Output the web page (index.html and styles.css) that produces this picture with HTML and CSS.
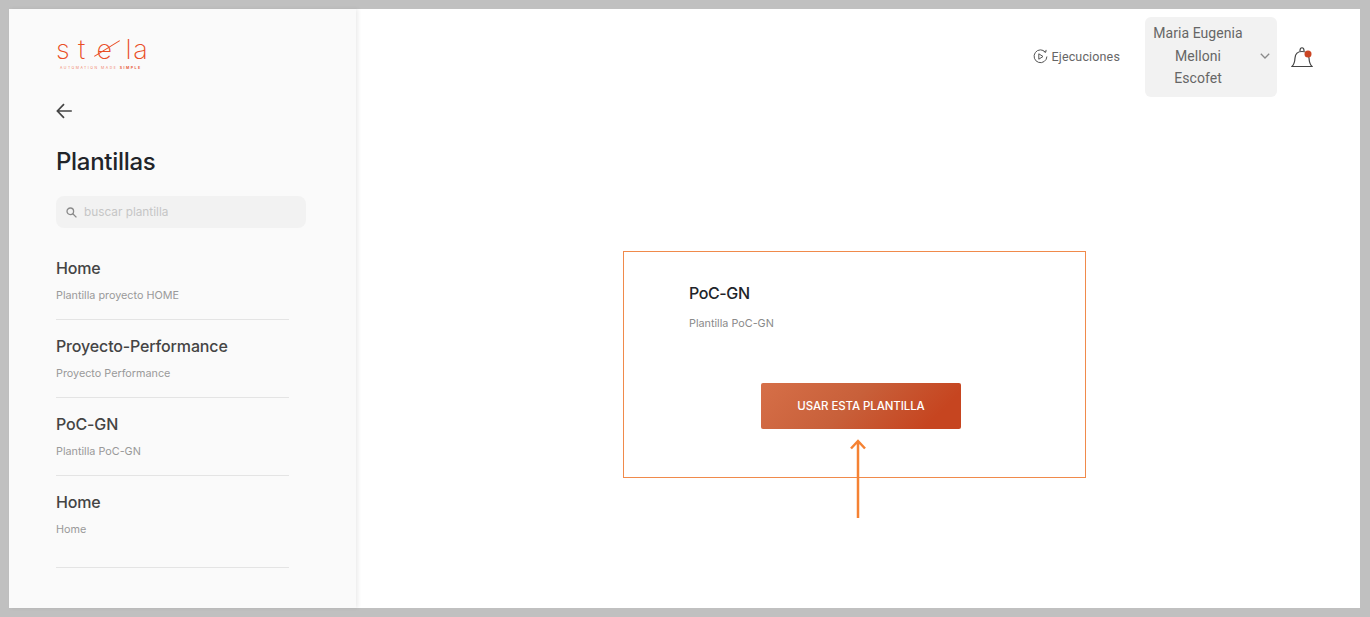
FILE: index.html
```html
<!DOCTYPE html>
<html lang="es">
<head>
  <meta charset="UTF-8" />
  <meta name="viewport" content="width=device-width, initial-scale=1.0"/>
  <title>Stela - Plantillas</title>
  <link rel="stylesheet" href="styles.css">
</head>
<body>
  <div class="frame">
    <aside class="sidebar">
      <div class="logo">
        <div class="logo-word"><span class="logo-s">s</span><span class="logo-t">t</span><span class="logo-e">e</span><span class="logo-l">l</span>a</div>
        <div class="logo-tag">AUTOMATION MADE <b>SIMPLE</b></div>
      </div>

      <a class="back" href="#" aria-label="Volver">
        <svg width="16" height="16" viewBox="0 0 16 16" fill="none" stroke="#444" stroke-width="1.7">
          <path d="M15.8 8H1.400M8 1.200L1.400 8 8 14.800"/>
        </svg>
      </a>

      <h1 class="side-title">Plantillas</h1>

      <div class="search">
        <svg width="11" height="11" viewBox="0 0 11 11" fill="none" stroke="#8a8a8a" stroke-width="1.3">
          <circle cx="4.300" cy="4.300" r="3.300"/>
          <path d="M6.800 6.800L10.400 10.400"/>
        </svg>
        <span>buscar plantilla</span>
      </div>

      <ul class="tpl-list">
        <li class="tpl-item">
          <div class="tpl-name">Home</div>
          <div class="tpl-desc">Plantilla proyecto HOME</div>
        </li>
        <li class="tpl-item">
          <div class="tpl-name">Proyecto-Performance</div>
          <div class="tpl-desc">Proyecto Performance</div>
        </li>
        <li class="tpl-item">
          <div class="tpl-name">PoC-GN</div>
          <div class="tpl-desc">Plantilla PoC-GN</div>
        </li>
        <li class="tpl-item tpl-last">
          <div class="tpl-name">Home</div>
          <div class="tpl-desc">Home</div>
        </li>
      </ul>
    </aside>

    <main class="main">
      <header class="topbar">
        <a class="runs" href="#">
          <svg width="15" height="15" viewBox="0 0 15 15" fill="none" stroke="#555" stroke-width="1">
            <path d="M12.600 3.400A6.400 6.400 0 1 0 13.900 7.500"/>
            <path d="M10.600 2.600l2.200.5.3-2.200"/>
            <path d="M5.800 4.800l4.200 2.700-4.200 2.700z"/>
          </svg>
          <span>Ejecuciones</span>
        </a>
        <div class="user">
          <div class="user-name">Maria Eugenia Melloni Escofet</div>
          <svg width="10" height="6" viewBox="0 0 10 6" fill="none" stroke="#8a8a8a" stroke-width="1.3">
            <path d="M.8.8L5 5l4.200-4.200"/>
          </svg>
        </div>
        <a class="bell" href="#" aria-label="Notificaciones">
          <svg width="22" height="22" viewBox="0 0 22 22" fill="none" stroke="#444" stroke-width="1.200">
            <path d="M1 20.500h20c-2-2-2.800-5-3-8.500C17.700 8 15.500 5.500 11 5.500S4.300 8 4 12C3.800 15.500 3 18.500 1 20.500z"/>
            <path d="M9 5.500c-.5-5 4.500-5 4 0"/>
            <circle cx="17" cy="8" r="3.500" fill="#cb4523" stroke="none"/>
          </svg>
        </a>
      </header>

      <section class="card">
        <h2 class="card-title">PoC-GN</h2>
        <p class="card-desc">Plantilla PoC-GN</p>
        <a class="btn-usar" href="#">USAR ESTA PLANTILLA</a>
        <svg class="card-arrow" width="18" height="80" viewBox="0 0 18 80" fill="none" stroke="#f58233" stroke-width="2.500">
          <path d="M9 80V3M2 10.500L9 3l7 7.500"/>
        </svg>
      </section>
    </main>
  </div>
</body>
</html>
```

FILE: styles.css
```css
* {
  box-sizing: border-box;
}

html, body {
  height: 100%;
}

body {
  margin: 0;
  background-color: #c0c0c0;
  font-family: 'Inter', 'Liberation Sans', sans-serif;
  overflow: hidden;
}

a {
  text-decoration: none;
  color: inherit;
}

.frame {
  display: flex;
  height: 617px;
  padding: 9px 10px 9px 9px;
}

/* SIDEBAR */
.sidebar {
  width: 347px;
  flex-shrink: 0;
  padding: 30px 0 0 47px;
  background-color: #fafafa;
  box-shadow: 2px 0 4px rgba(0, 0, 0, 0.08);
  position: relative;
  z-index: 2;
}

.logo {
  width: 92px;
  height: 33px;
  color: #e94e26;
}

.logo-word {
  font-size: 27px;
  font-weight: 200;
  line-height: 22px;
  white-space: nowrap;
}

.logo-s { letter-spacing: 8.400px; }
.logo-t { letter-spacing: 11.200px; }
.logo-l { letter-spacing: 1.700px; }

.logo-e {
  position: relative;
  letter-spacing: 13.500px;
}

.logo-e::after {
  content: "";
  position: absolute;
  left: -5px;
  top: 15px;
  width: 30px;
  height: 1px;
  background-color: #e94e26;
  transform: rotate(-32deg);
}

.logo-tag {
  margin-top: 4.200px;
  padding-left: 4px;
  font-size: 3.500px;
  line-height: 6px;
  letter-spacing: 1.500px;
  white-space: nowrap;
  color: #f0846a;
}

.logo-tag b {
  color: #e8603d;
}

.back {
  display: block;
  width: 16px;
  height: 16px;
  margin-top: 31px;
}

.side-title {
  margin: 28px 0 0;
  font-size: 24px;
  line-height: 30px;
  font-weight: 550;
  color: #212429;
  letter-spacing: -0.3px;
}

.search {
  display: flex;
  align-items: center;
  gap: 7px;
  width: 250px;
  height: 32px;
  margin-top: 19px;
  padding-left: 10px;
  background-color: #f2f2f2;
  border-radius: 8px;
  font-size: 11.800px;
  color: #c6c6c6;
}

.tpl-list {
  list-style: none;
  margin: 14px 0 0;
  padding: 0;
  width: 233px;
}

.tpl-item {
  height: 78px;
  padding-top: 15px;
  border-bottom: 1px solid #e4e4e4;
}

.tpl-last {
  height: 92px;
}

.tpl-name {
  font-size: 16px;
  line-height: 22px;
  font-weight: 500;
  color: #444;
  letter-spacing: -0.15px;
  white-space: nowrap;
}

.tpl-desc {
  margin-top: 10px;
  font-size: 10.800px;
  line-height: 14px;
  color: #999;
}

/* MAIN */
.main {
  flex: 1;
  background-color: #fff;
}

.topbar {
  display: flex;
  justify-content: flex-end;
  align-items: center;
  height: 80px;
  margin-top: 8px;
  padding-right: 47px;
  font-family: 'Roboto', 'Liberation Sans', sans-serif;
  color: #666;
}

.runs {
  display: flex;
  align-items: center;
  gap: 3px;
  margin-right: 25px;
  margin-top: -1px;
  font-size: 12.500px;
  letter-spacing: 0.15px;
}

.user {
  display: flex;
  align-items: center;
  justify-content: space-between;
  width: 132px;
  height: 80px;
  padding: 0 7px 2px 5px;
  background-color: #f2f2f2;
  border-radius: 6px;
}

.user-name {
  width: 96px;
  font-size: 14px;
  line-height: 22.500px;
  letter-spacing: 0.05px;
  text-align: center;
}

.bell {
  display: block;
  width: 22px;
  height: 22px;
  margin-left: 14px;
}

.card {
  position: relative;
  display: flex;
  flex-direction: column;
  align-items: flex-start;
  width: 463px;
  height: 227px;
  margin: 154px 0 0 267px;
  padding: 30px 0 0 65px;
  border: 1px solid #f08a4b;
}

.card-title {
  margin: 0;
  font-size: 16px;
  line-height: 22px;
  font-weight: 500;
  color: #212429;
  letter-spacing: -0.4px;
}

.card-desc {
  margin: 13px 0 0;
  font-size: 10.800px;
  line-height: 14px;
  color: #8a8a8a;
}

.btn-usar {
  display: block;
  width: 200px;
  height: 46px;
  margin: 52px 0 0 72px;
  background: linear-gradient(135deg, #d66f48 0%, #c8603a 45%, #c64520 85%);
  border-radius: 2px;
  color: #fff;
  font-size: 11.500px;
  font-weight: 500;
  letter-spacing: -0.1px;
  line-height: 46px;
  text-align: center;
}

.card-arrow {
  position: absolute;
  left: 225px;
  top: 186px;
}
```
